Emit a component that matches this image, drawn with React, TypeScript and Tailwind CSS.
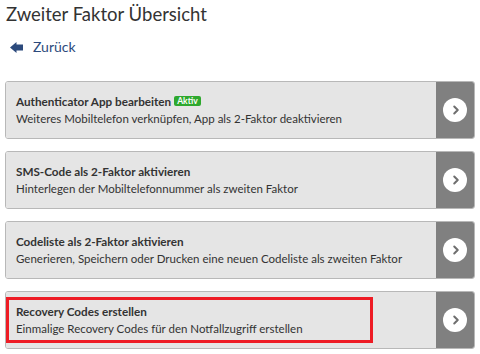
import { ChevronRight } from 'lucide-react';

interface Option {
  title: string;
  text: string;
  active?: boolean;
  highlight?: boolean;
}

const options: Option[] = [
  {
    title: 'Authenticator App bearbeiten',
    text: 'Weiteres Mobiltelefon verknüpfen, App als 2-Faktor deaktivieren',
    active: true
  },
  {
    title: 'SMS-Code als 2-Faktor aktivieren',
    text: 'Hinterlegen der Mobiltelefonnummer als zweiten Faktor'
  },
  {
    title: 'Codeliste als 2-Faktor aktivieren',
    text: 'Generieren, Speichern oder Drucken eine neuen Codeliste als zweiten Faktor'
  },
  {
    title: 'Recovery Codes erstellen',
    text: 'Einmalige Recovery Codes für den Notfallzugriff erstellen',
    highlight: true
  }
];

function BackArrow() {
  return (
    <svg width="13" height="11" viewBox="0 0 13 11">
      <path d="M0 5.5 L6.5 0 L6.5 2.5 L13 2.5 L13 8.5 L6.5 8.5 L6.5 11 Z" fill="#2c4a7c" />
    </svg>
  );
}

function OptionCard({ option }: { option: Option }) {
  const body = (
    <>
      <div className="flex items-center text-[11.7px] font-bold leading-[16px] text-[#333]">
        {option.title}
        {option.active && (
          <span className="ml-[3px] rounded-[2px] bg-[#2ea82e] px-[3px] text-[8.5px] font-bold leading-[10px] text-white">
            Aktiv
          </span>
        )}
      </div>
      <div className="mt-[2px] text-[11.5px] leading-[16px] text-[#333]">{option.text}</div>
    </>
  );

  return (
    <div className="flex h-[58px] overflow-hidden rounded-[3px] border border-[#b8b8b8]">
      <div className="flex flex-1 flex-col justify-center bg-[#e5e5e5]">
        {option.highlight ? (
          <div className="flex h-[46px] w-[367px] flex-col justify-center border-[3px] border-[#ee1c25] pl-[7px]">
            {body}
          </div>
        ) : (
          <div className="pl-[10px]">{body}</div>
        )}
      </div>
      <div className="flex w-[38px] items-center justify-center bg-[#808080]">
        <div className="flex h-[24px] w-[24px] items-center justify-center rounded-full bg-white">
          <ChevronRight size={14} strokeWidth={3.5} color="#707070" className="ml-[1px]" />
        </div>
      </div>
    </div>
  );
}

export default function App() {
  return (
    <div className="h-[354px] w-[480px] overflow-hidden bg-white px-[5px] font-['Lato','Open_Sans',sans-serif]">
      <h1 className="pl-[1px] pt-[1px] text-[18.5px] leading-[26px] text-[#333]">Zweiter Faktor Übersicht</h1>
      <div className="mt-[10px] flex items-center gap-[10px] pl-[5px] text-[14px] leading-[20px] text-[#2c4a7c]">
        <BackArrow />
        <span>Zurück</span>
      </div>
      <div className="mt-[24px] flex flex-col gap-[12px]">
        {options.map((o) => (
          <OptionCard key={o.title} option={o} />
        ))}
      </div>
    </div>
  );
}
